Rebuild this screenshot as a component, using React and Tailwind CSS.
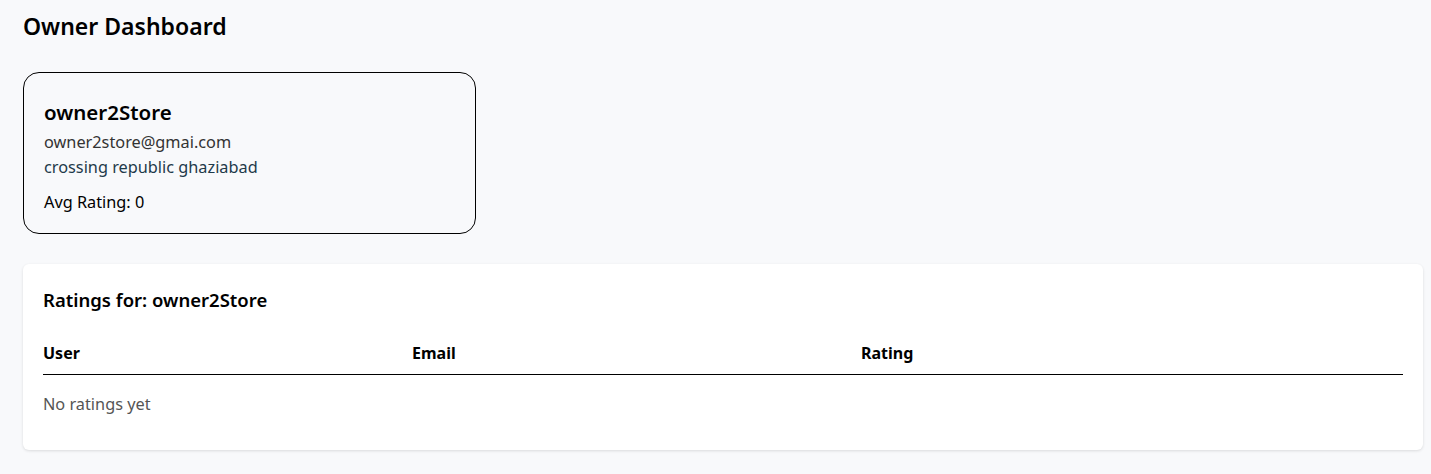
export default function App() {
  return (
    <div className="min-h-screen bg-[#f8f9fb] pl-[23px] pr-2 pt-3 pb-6 text-black" style={{ fontFamily: '"Noto Sans", "Open Sans", sans-serif' }}>
      <h1 className="text-[23px] font-semibold leading-[28px] mt-0">Owner Dashboard</h1>

      <div className="mt-8 w-[453px] rounded-2xl border border-black px-5 pt-[25px] pb-[18px]">
        <h2 className="text-[20.5px] font-semibold leading-[28px]">owner2Store</h2>
        <p className="mt-[4px] text-[16.3px] leading-[25px] text-[#333]">owner2store@gmai.com</p>
        <p className="text-[16.3px] leading-[25px] text-[#1e3a4a]">crossing republic ghaziabad</p>
        <p className="mt-[10px] text-[16.3px] leading-[25px]">Avg Rating: 0</p>
      </div>

      <div className="mt-[30px] rounded-md bg-white px-5 pt-[24px] pb-[34px] shadow-[0_1px_3px_rgba(0,0,0,0.12)]">
        <h3 className="text-[18.5px] font-semibold leading-[24px]">Ratings for: owner2Store</h3>
        <table className="mt-[29px] w-full border-collapse text-left">
          <thead>
            <tr className="border-b border-black">
              <th className="w-[369px] pb-[9px] text-[16px] font-bold leading-[24px]">User</th>
              <th className="w-[449px] pb-[9px] text-[16px] font-bold leading-[24px]">Email</th>
              <th className="pb-[9px] text-[16px] font-bold leading-[24px]">Rating</th>
            </tr>
          </thead>
          <tbody>
            <tr>
              <td colSpan={3} className="pt-[17px] text-[16.3px] leading-[24px] text-[#555]">No ratings yet</td>
            </tr>
          </tbody>
        </table>
      </div>
    </div>
  )
}
